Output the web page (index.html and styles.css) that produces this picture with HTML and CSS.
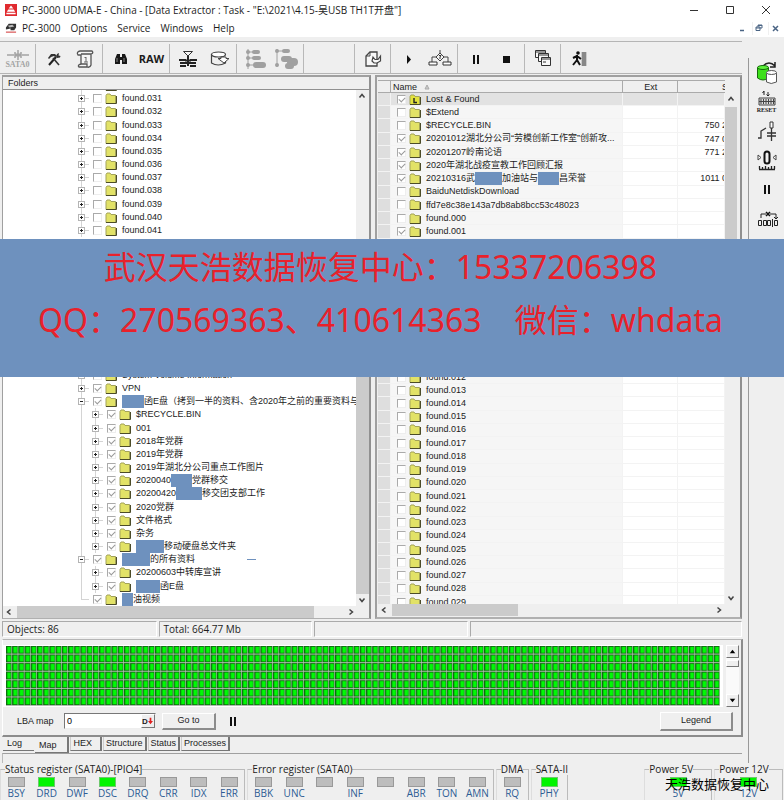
FILE: index.html
```html
<!DOCTYPE html>
<html lang="zh-CN">
<head>
<meta charset="utf-8">
<title>PC-3000 UDMA-E</title>
<link rel="stylesheet" href="styles.css">
</head>
<body>
<svg class="defs" aria-hidden="true">
  <symbol id="folder" viewBox="0 0 12 11">
    <path d="M1 10.500V2.500L2 1H5L6 2.500H10.500V10.500Z" fill="#e2e267" stroke="#a3a35a"/>
    <path d="M1 10.500H11.500V3" fill="none" stroke="#4c4c28"/>
  </symbol>
  <symbol id="folder-lost" viewBox="0 0 12 11">
    <path d="M1 10.500V2.500L2 1H5L6 2.500H10.500V10.500Z" fill="#e2e23c" stroke="#a3a35a"/>
    <path d="M1 10.500H11.500V3" fill="none" stroke="#4c4c28"/>
    <path d="M5 4V8.500H8" fill="none" stroke="#222" stroke-width="1.400"/>
  </symbol>
  <symbol id="up" viewBox="0 0 12 12"><path d="M3.500 7.500L6 4.500L8.500 7.500" fill="none" stroke="#444" stroke-width="1.500"/></symbol>
  <symbol id="down" viewBox="0 0 12 12"><path d="M3.500 4.500L6 7.500L8.500 4.500" fill="none" stroke="#444" stroke-width="1.500"/></symbol>
  <symbol id="left" viewBox="0 0 12 12"><path d="M7.500 3.500L4.500 6L7.500 8.500" fill="none" stroke="#444" stroke-width="1.500"/></symbol>
  <symbol id="right" viewBox="0 0 12 12"><path d="M4.500 3.500L7.500 6L4.500 8.500" fill="none" stroke="#444" stroke-width="1.500"/></symbol>
  <symbol id="pause" viewBox="0 0 24 24"><path d="M9 8H11V17H9ZM13 8H15V17H13Z" fill="#111"/></symbol>
</svg>

<header class="titlebar">
  <svg class="app-icon" viewBox="0 0 13 13"><rect width="13" height="13" fill="#e02a2f"/><path d="M6.500 1.500L9 5H4ZM3.500 6H9.500L11 8.500H2ZM1.500 9.500H11.500V11H1.500Z" fill="#fff"/></svg>
  <span class="title">PC-3000 UDMA-E - China - [Data Extractor : Task - "E:\2021\4.15-吴USB TH1T开盘"]</span>
  <button class="win" aria-label="Minimize"><svg viewBox="0 0 12 12"><path d="M2 6.500H10" stroke="#333"/></svg></button>
  <button class="win" aria-label="Maximize"><svg viewBox="0 0 12 12"><path d="M2.500 2.500H9.500V9.500H2.500Z" fill="none" stroke="#333"/></svg></button>
  <button class="win" aria-label="Close"><svg viewBox="0 0 12 12"><path d="M2 2L10 10M10 2L2 10" stroke="#333"/></svg></button>
</header>

<nav class="menubar">
  <svg class="app-icon" viewBox="0 0 13 13"><path d="M1 6L4 2H12V6L10 9H6V7L1 8Z" fill="#333"/><path d="M3 4L8 3L10 5L5 6Z" fill="#bbb"/><path d="M1 11H12" stroke="#dd6a6a" stroke-width="1.500"/></svg>
  <button>PC-3000</button><button>Options</button><button>Service</button><button>Windows</button><button>Help</button>
  <span class="mdi">
    <button aria-label="Minimize document"><svg viewBox="0 0 12 12"><path d="M3 8.500H7" stroke="#4a6484" stroke-width="1.500"/></svg></button>
    <button aria-label="Restore document"><svg viewBox="0 0 12 12"><path d="M5 5V3H9V6H7M3 5H7V8.500H3ZM3 6H7M5 3.500H9" fill="none" stroke="#4a6484"/></svg></button>
    <button aria-label="Close document"><svg viewBox="0 0 12 12"><path d="M4 4L9 9M9 4L4 9" stroke="#4a6484" stroke-width="1.500"/></svg></button>
  </span>
</nav>

<div class="workspace">
  <main class="main">
    <div class="toolbar">
      <div class="group"><button aria-label="SATA0" class="port"><svg viewBox="0 0 24 12"><path d="M1 6H8M16 6H23M9 3V9M15 3V9M12 1V11" stroke="#a4a4a4" stroke-width="1.500"/><path d="M9 6H15" stroke="#a4a4a4" stroke-width="3"/></svg><b>SATA0</b></button></div>
      <div class="group">
        <button aria-label="Tools"><svg viewBox="0 0 24 24"><path d="M7 18L14 10" stroke="#222" stroke-width="2"/><path d="M6 11L9 7L13 7L15 9L13 10L12 9L9 10L7 12Z" fill="#333"/><path d="M11 11L17 18" stroke="#333" stroke-width="1.600"/><path d="M14 10L15 7L17 6L16.500 8.500L18.500 9L18 10.500L15 11Z" fill="#333"/></svg></button>
        <button aria-label="Script"><svg viewBox="0 0 24 24"><path d="M7 4H19Q21 6 18 7V18Q17 21 14 20H6Q4 18 8 17V8H5Q3 5 7 4ZM8 7H18M8 17H14V20" fill="#f6f6f6" stroke="#555" stroke-width="1.300"/><path d="M13 10V15M11.500 10.500H13M11 15H15" fill="none" stroke="#666"/></svg></button>
      </div>
      <div class="group">
        <button aria-label="Find"><svg viewBox="0 0 24 24"><path d="M8 7H11V10H13V7H16L18 12V17H13V13H11V17H6V12Z" fill="#181818"/><path d="M8 11V15M15 11V15" stroke="#888"/></svg></button>
        <button><b class="raw">RAW</b></button>
      </div>
      <div class="group">
        <button aria-label="Sort"><svg viewBox="0 0 24 24"><path d="M7.500 4.500H16.500L12 9Z" fill="#f4f4f4" stroke="#333"/><path d="M12 9V19" stroke="#222" stroke-width="2"/><path d="M3 13H10M14 13H21M4 16H20M4 19H10M14 19H20M9 13.500H15" stroke="#222" stroke-width="2"/></svg></button>
        <button aria-label="Disk"><svg viewBox="0 0 24 24"><path d="M4.500 7V16Q11 20 18.500 16V13M4.500 7V9" fill="none" stroke="#444" stroke-width="1.200"/><ellipse cx="11.500" cy="7.500" rx="7" ry="2.500" fill="#fff" stroke="#444" stroke-width="1.200"/><path d="M11 11.500H14V10H19V11.500H22L17 16Z" fill="#fff" stroke="#444"/></svg></button>
      </div>
      <div class="group">
        <button aria-label="Map"><svg viewBox="0 0 24 24"><path d="M5 2V22M5 5H10M5 11H10M5 18H10" stroke="#a0a0a0"/><circle cx="5" cy="5" r="2" fill="#a0a0a0"/><circle cx="5" cy="11" r="2" fill="#a0a0a0"/><circle cx="5" cy="18" r="2" fill="#a0a0a0"/><rect x="9" y="3" width="8" height="4" rx="2" fill="#a0a0a0"/><rect x="9" y="9" width="9" height="4" rx="2" fill="#a0a0a0"/><rect x="10" y="15" width="13" height="6" rx="3" fill="#a0a0a0"/></svg></button>
        <button aria-label="Map selected"><svg viewBox="0 0 24 24"><path d="M3 2V20M3 4H14" stroke="#a0a0a0"/><circle cx="3" cy="4" r="2" fill="#a0a0a0"/><circle cx="3" cy="18" r="2" fill="#a0a0a0"/><rect x="8" y="2" width="8" height="4" rx="2" fill="#a0a0a0"/><rect x="7" y="9" width="11" height="6" rx="3" fill="#a0a0a0"/><rect x="13" y="11" width="11" height="8" rx="4" fill="#a0a0a0"/><rect x="11" y="16" width="9" height="6" rx="3" fill="#a0a0a0"/></svg></button>
      </div>
      <div class="group blank"></div>
      <div class="group"><button aria-label="Export"><svg viewBox="0 0 24 24"><path d="M9 5H16V19H5V9Z" fill="#f8f8f8" stroke="#444" stroke-width="1.300"/><path d="M9 5V9H5" fill="none" stroke="#444"/><path d="M12 10L14 12.500H17L19.500 9V14L16 16H13L11 14Z" fill="#f8f8f8" stroke="#444" stroke-width="1.200"/></svg></button></div>
      <div class="group">
        <button aria-label="Start"><svg viewBox="0 0 24 24"><path d="M10 8L14 12.500L10 17Z" fill="#111"/></svg></button>
        <button aria-label="Options"><svg viewBox="0 0 24 24"><path d="M12 6L16 10L12 14L8 10ZM12 3V6M8 10H4V15M16 10H20V15" fill="#f6f6f6" stroke="#444"/><path d="M1 15H9V18H1ZM15 15H23V18H15Z" fill="#fff" stroke="#333"/><path d="M11 8.500H13L12 10V12" fill="none" stroke="#333"/></svg></button>
      </div>
      <div class="group">
        <button aria-label="Pause"><svg viewBox="0 0 24 24"><use href="#pause"/></svg></button>
        <button aria-label="Stop"><svg viewBox="0 0 24 24"><path d="M8 9H15V16H8Z" fill="#111"/></svg></button>
      </div>
      <div class="group"><button aria-label="Windows"><svg viewBox="0 0 24 24"><g fill="#f8f8f8" stroke="#333"><path d="M4.500 3.500H14.500V10.500H4.500ZM4.500 5H14.500"/><path d="M7.500 6.500H17.500V14.500H7.500ZM7.500 8H17.500"/><path d="M10.500 10.500H19.500V18.500H10.500ZM10.500 12H19.500"/></g><path d="M12 15H15" stroke="#333"/></svg></button></div>
      <div class="group last"><button aria-label="Exit"><svg viewBox="0 0 24 24"><rect x="15" y="5" width="4" height="14" fill="#888"/><path d="M14.500 5V19M19.500 5V19" stroke="#ccc"/><circle cx="11" cy="6" r="1.800" fill="#111"/><path d="M10 8V13L13 18M10 13L6 18M10 9L6 11M10 9L14 12" fill="none" stroke="#111" stroke-width="2"/></svg></button></div>
    </div>

    <div class="panels">
      <section class="panel folders">
        <h2>Folders</h2>
        <div class="pane">
          <div class="tree-view"><ul class="tree" id="tree"></ul></div>
          <div class="vbar"><svg><use href="#up"/></svg><i class="thumb low"></i><svg><use href="#down"/></svg></div>
        </div>
        <div class="hbar"><svg><use href="#left"/></svg><i class="thumb wide"></i><i class="rest"></i><svg><use href="#right"/></svg><i class="corner"></i></div>
      </section>

      <section class="panel files">
        <table class="grid">
          <thead><tr><th></th><th class="name">Name <svg class="sort" viewBox="0 0 6 6"><path d="M3 1L5 5H1Z" fill="#ccc" stroke="#aaa"/></svg></th><th class="ext">Ext</th><th class="size"><span>S</span></th></tr></thead>
          <tbody id="rows"></tbody>
        </table>
        <div class="vbar"><svg><use href="#up"/></svg><i class="thumb high"></i><svg><use href="#down"/></svg></div>
        <div class="hbar"><svg><use href="#left"/></svg><i class="thumb narrow"></i><i class="rest"></i><svg><use href="#right"/></svg><i class="corner"></i></div>
      </section>
    </div>

    <div class="statusbar"><span>Objects: 86</span><span>Total: 664.77 Mb</span><span></span><span></span></div>

    <section class="map-panel">
      <div class="map-row">
        <div class="map-view">
          <svg class="map" viewBox="0 0 1150 70" preserveAspectRatio="none" role="img" aria-label="LBA map">
            <defs><pattern id="cell" width="10" height="10" patternUnits="userSpaceOnUse"><rect width="10" height="10" fill="#c4c4c4"/><rect width="9" height="9" fill="#0e6a0e"/><rect x="2" y="1" width="6" height="7" fill="#00fa05"/></pattern></defs>
            <rect width="1150" height="70" fill="url(#cell)"/>
          </svg>
        </div>
        <div class="classic-bar"><button aria-label="Scroll up"><svg viewBox="0 0 12 12"><path d="M6 4L9 8H3Z"/></svg></button><i></i><button aria-label="Scroll down"><svg viewBox="0 0 12 12"><path d="M6 8L9 4H3Z"/></svg></button></div>
      </div>
      <div class="controls">
        <label for="lba">LBA map</label>
        <span class="lba-box"><input id="lba" type="text" value="0"><button aria-label="Choose base"><b>D</b><svg viewBox="0 0 6 8"><path d="M2 0H4V4H6L3 8L0 4H2Z" fill="#e02020"/></svg></button></span>
        <button class="push">Go to</button>
        <button class="icon-only" aria-label="Pause map"><svg viewBox="0 0 24 24"><use href="#pause"/></svg></button>
        <button class="push legend">Legend</button>
      </div>
    </section>
    <div class="tabs"><button>Log</button><button class="active">Map</button><button>HEX</button><button>Structure</button><button>Status</button><button>Processes</button></div>
    <div class="tab-edge"></div>
  </main>

  <aside class="side">
    <button aria-label="Copy drive"><svg viewBox="0 0 24 24"><path d="M8 5Q14 -1 20 5M20 1V6H15" fill="none" stroke="#222" stroke-width="1.500"/><path d="M2.500 6.500V17Q8 21 13.500 17V6.500" fill="#3de01a" stroke="#176b0c"/><ellipse cx="8" cy="6.500" rx="5.500" ry="2" fill="#5cf03a" stroke="#176b0c"/><path d="M11.500 12V21Q16 24 21.500 21V12" fill="#fff" stroke="#555"/><ellipse cx="16.500" cy="11.500" rx="5" ry="2" fill="#fff" stroke="#555"/></svg></button>
    <button aria-label="Reset"><svg viewBox="0 0 24 16"><path d="M9 0V4M7.500 2L9 0M13 1V5L14.500 3.500M13 5L11.500 3.500" fill="none" stroke="#222"/><path d="M4 7H20V14H4Z" fill="#ddd" stroke="#444"/><path d="M6 8V13M8.500 8V13M11 8V13M13.500 8V13M16 8V13M18.500 8V13M4 10.500H20" stroke="#444"/></svg><b>RESET</b></button>
    <button aria-label="Power"><svg viewBox="0 0 24 24"><path d="M3 19H6V12L11 9M12 14H21M12 17H21M16.500 8V22" fill="none" stroke="#333" stroke-width="1.300"/><path d="M15 3H18V9H15Z" fill="#fff" stroke="#333"/></svg></button>
    <button aria-label="Recalibrate"><svg viewBox="0 0 24 24"><rect x="9.500" y="3.500" width="5" height="12" rx="2.500" fill="none" stroke="#111" stroke-width="2"/><path d="M3 7L6 9.500L3 12ZM21 7L18 9.500L21 12Z" fill="#fff" stroke="#444"/><path d="M4 21.500H20M4.500 18V21M7.500 19V21M10.500 18V21M13.500 19V21M16.500 18V21M19.500 18V21" stroke="#222" stroke-width="1.300"/></svg></button>
    <button aria-label="Pause"><svg viewBox="0 0 24 24"><use href="#pause"/></svg></button>
    <button aria-label="Sectors"><svg viewBox="0 0 24 24"><path d="M6 12V8H11M15 8H21V13M19 11L21 13L23 11" fill="none" stroke="#222"/><path d="M11 6L15 10M15 6L11 10" stroke="#111" stroke-width="1.500"/><path d="M3.500 14.500H6.500V19.500H3.500ZM8.500 14.500H11.500V19.500H8.500ZM12.500 14.500H15.500V19.500H12.500ZM19.500 14.500H22.500V19.500H19.500ZM17.500 13V21" fill="none" stroke="#222"/></svg></button>
  </aside>
</div>

<footer class="registers" id="registers">
  <p class="watermark">天浩数据恢复中心</p>
</footer>

<div class="banner"><p>武汉天浩数据恢复中心：15337206398</p><p>QQ：270569363、410614363&#160;&#160;&#160; 微信：whdata</p></div>
<script src="app.js"></script>
</body>
</html>
```
FILE: styles.css
```css
* { box-sizing: border-box; margin: 0; padding: 0; }
body {
  position: relative;
  display: flex;
  flex-direction: column;
  height: 100vh;
  overflow: hidden;
  background: #efefef;
  color: #1c1c1c;
  font: 9px/13px "Liberation Sans", "Noto Sans CJK SC", sans-serif;
}
button { border: 0; background: none; color: inherit; font: inherit; }
.defs { position: absolute; width: 0; height: 0; }

.titlebar, .menubar { display: flex; align-items: center; background: #fff; font: 10px/18px "Open Sans", "Noto Sans CJK SC", sans-serif; padding-left: 5px; flex: none; }
.titlebar { height: 19px; }
.menubar { height: 18px; gap: 10px; }
.app-icon { width: 12px; height: 12px; flex: none; }
.title { flex: 1; margin-left: 5px; white-space: nowrap; }
.win { width: 36px; height: 19px; display: grid; place-items: center; }
.win svg { width: 12px; height: 12px; }
.menubar .app-icon + button { margin-left: -5px; }
.mdi { margin-left: auto; display: flex; gap: 1px; background: #f0f0f0; }
.mdi button { width: 15px; height: 13px; background: #fff; }
.mdi svg { width: 12px; height: 12px; display: block; }

.workspace { display: flex; flex: 1; min-height: 0; }
.main { flex: 1; min-width: 0; display: flex; flex-direction: column; padding-left: 2px; padding-right: 6px; }

.toolbar { display: flex; flex: none; height: 37px; margin-top: 4px; margin-left: -2px; border-top: 1px solid #b5b5b5; padding: 2px 0 5px; margin-bottom: -3px; box-shadow: inset 0 -4px #efefef, inset 0 -5px #b5b5b5; }
.group { display: flex; align-items: center; padding: 0 2px; border-right: 1px solid #b8b8b8; }
.group.blank { width: 51px; }
.group.last { border: 0; }
.group button { width: 31px; height: 26px; display: flex; flex-direction: column; align-items: center; justify-content: center; }
.group svg { width: 24px; height: 24px; }
.group .port svg { height: 12px; }
.port b { color: #a4a4a4; font: bold 8px/8px "Liberation Serif", serif; }
.raw { font: bold 11px/14px "Open Sans", sans-serif; }

.panels { flex: 1; min-height: 0; display: grid; grid-template-columns: 369fr 367fr; gap: 4px; }
.panel { border: 2px solid #a0a0a0; border-right-color: #909090; border-bottom-color: #b0b0b0; min-width: 0; min-height: 0; }
.folders { display: flex; flex-direction: column; border-left-width: 1px; border-bottom-width: 1px; }
.folders h2 { font: inherit; height: 13px; padding-left: 5px; border-bottom: 1px solid #909090; flex: none; }
.pane { flex: 1; min-height: 0; display: flex; background: #fff; }
.tree-view { flex: 1; min-width: 0; overflow: hidden; display: flex; }
.tree { list-style: none; margin-top: -11px; padding-left: 75px; display: flex; flex-direction: column; flex: 1; min-width: 0; }
.tree li { flex: 1 1 0; min-height: 0; display: flex; align-items: center; white-space: nowrap; }
.guide { width: 14px; align-self: stretch; flex: none; background: linear-gradient(#d4d4d4, #d4d4d4) 3px 0 / 1px 100% no-repeat; }
.branch { width: 15px; align-self: stretch; flex: none; display: flex; align-items: center; background: linear-gradient(#d4d4d4, #d4d4d4) 3px 0 / 1px 100% no-repeat, linear-gradient(#d4d4d4, #d4d4d4) 3px 50% / 8px 1px no-repeat; }
.branch.end { background-size: 1px 50%, 8px 1px; }
.toggle { width: 7px; height: 7px; border: 1px solid #b4b4b4; background: linear-gradient(#222, #222) 1px 2px / 3px 1px no-repeat, linear-gradient(#222, #222) 2px 1px / 1px 3px no-repeat, #fff; }
.toggle.open { background: linear-gradient(#222, #222) 1px 2px / 3px 1px no-repeat, #fff; }

input[type="checkbox"] { appearance: none; width: 9px; height: 9px; flex: none; background: #fff; border: 1px solid #eee; border-top-color: #aaa; border-left-color: #aaa; }
input[type="checkbox"]:checked::before { content: ""; display: block; width: 5px; height: 3px; margin: 1px; border: solid #999; border-width: 0 0 1px 1px; transform: rotate(-45deg); }
.folder { width: 12px; height: 11px; margin: 0 5px 0 3px; flex: none; }
.label { display: flex; align-items: center; white-space: pre; }
.patch { background: #6e91be; height: 13px; flex: none; }
.mark { width: 9px; height: 1px; background: #6e91be; margin-left: 52px; }

.vbar { width: 12px; background: #efefef; display: flex; flex-direction: column; flex: none; }
.vbar svg, .hbar svg { width: 12px; height: 12px; flex: none; }
.hbar { height: 12px; background: #efefef; display: flex; }
.folders .vbar { width: 13px; }
.thumb { background: #cbcbcb; }
.thumb.low { flex: 1; margin-top: 200px; }
.thumb.high { height: 200px; margin-top: 2px; margin-bottom: auto; }
.thumb.wide { flex: 296; margin-left: 2px; }
.folders .rest { flex: 31; }
.thumb.narrow { flex: 126; margin-left: 2px; }
.files .rest { flex: 194; }
.corner { width: 12px; }

.files { display: grid; grid-template-columns: minmax(0, 1fr) 12px; grid-template-rows: minmax(0, 1fr) 12px; padding: 3px 3px 1px 1px; }
.files .vbar { margin-top: 13px; }
.files .hbar { grid-column: 1 / -1; }
.grid { display: flex; flex-direction: column; min-height: 0; overflow: hidden; }
.grid thead { display: block; height: 13px; flex: none; }
.grid tbody { flex: 1; min-height: 0; display: flex; flex-direction: column; margin-bottom: -5px; background: #fff; }
.grid tr { display: grid; grid-template-columns: 13px 231fr 55fr 47fr; }
.grid tbody tr { flex: 1 1 0; min-height: 0; }
.grid th { font-weight: normal; height: 13px; text-align: left; border: solid #aaa; border-width: 1px 1px 1px 0; padding-left: 2px; overflow: hidden; }
.grid th.ext { text-align: center; }
.grid th.size { text-align: right; border-right: 0; }
.size span { margin-right: -3px; }
.sort { width: 6px; height: 6px; margin: 0 0 2px 4px; vertical-align: middle; }
.grid td { min-width: 0; min-height: 0; border-bottom: 1px solid #f3f3f3; border-right: 1px solid #f3f3f3; overflow: hidden; white-space: nowrap; }
.grid td:first-child { background: #dedede; }
.grid td.name { display: flex; align-items: center; padding-left: 6px; background: #f6f6f6; overflow: visible; }
.grid td.size { text-align: right; }
.grid tr.selected td { background: #e2e2e2; }

.statusbar { display: grid; grid-template-columns: 155fr 154fr 154fr 273fr; gap: 2px; height: 16px; margin-top: 2px; flex: none; font: 10px/14px "Open Sans", sans-serif; }
.statusbar span { border: 1px solid #fff; border-top-color: #aaa; border-left-color: #aaa; padding-left: 4px; }

.map-panel { margin-top: 2px; height: 98px; flex: none; border: 2px solid #8c8c8c; border-top: 1px solid #b5b5b5; border-left: 1px solid #fff; padding-top: 5px; margin-right: -1px; }
.map-row { display: flex; justify-content: space-between; padding-right: 2px; height: 62px; }
.map-view { flex: 1; background: #fff; padding: 1px 3px; }
.map { display: block; width: 100%; height: 60px; }
.classic-bar { width: 13px; margin-left: 3px; background: #fafafa; display: flex; flex-direction: column; }
.classic-bar button, .classic-bar i { height: 13px; background: #efefef; border: 1px solid #fff; border-right-color: #777; border-bottom-color: #777; }
.classic-bar i { height: 7px; margin: 2px 0 auto; }
.classic-bar svg { display: block; width: 11px; height: 11px; }
.controls { display: flex; align-items: center; height: 28px; padding: 0 8px 0 14px; }
.controls label { width: 47px; }
.lba-box { display: flex; width: 92px; height: 16px; border: 1px solid #777; border-right-color: #eee; border-bottom-color: #eee; background: #fff; }
.lba-box input { flex: 1; min-width: 0; border: 0; outline: 0; background: none; font: inherit; padding-left: 2px; }
.lba-box button { display: flex; align-items: center; background: #efefef; width: 14px; border: 1px solid #fff; border-right-color: #777; border-bottom-color: #777; font-size: 8px; }
.lba-box svg { width: 5px; height: 8px; }
.push { width: 54px; height: 17px; margin-left: 6px; background: #efefef; border: 1px solid #fff; border-right: 2px solid #8c8c8c; border-bottom: 2px solid #8c8c8c; }
.push.legend { width: 73px; height: 19px; margin-left: auto; }
.icon-only { width: 24px; height: 24px; margin-left: 5px; }
.icon-only svg { width: 24px; height: 24px; display: block; }

.tabs { display: flex; flex: none; height: 16px; gap: 1px; padding-left: 1px; }
.tabs button { height: 14px; padding: 0 2px; border: solid #777; border-width: 0 2px 1px 1px; border-left-color: #ccc; }
.tabs button:first-child { padding: 0 12px 0 4px; border-width: 0 0 1px; }
.tabs .active { height: 16px; padding: 2px 10px 0 4px; border-left: 0; }
.tabs .active + button { padding: 0 8px 0 3px; }
.tab-edge { height: 10px; flex: none; border-top: 1px solid #a0a0a0; border-left: 1px solid #bbb; }

.side { width: 36px; margin-top: 21px; border-left: 1px solid #999; flex: none; }
.side button { width: 35px; height: 29px; display: flex; flex-direction: column; align-items: center; justify-content: center; }
.side svg { width: 24px; height: 24px; }
.side b { font: bold 6px/6px "Liberation Serif", serif; }
.side button:nth-child(2) svg { height: 16px; }

.registers { position: relative; display: grid; grid-template-columns: 246fr 247fr 33fr 37fr 73fr 68fr 69fr; height: 37px; flex: none; gap: 2px; padding-right: 1px; font: 10px/12px "Open Sans", sans-serif; overflow: hidden; }
.registers fieldset { border: 1px solid #bbb; border-bottom: 0; border-left-color: #ddd; min-width: 0; height: 50px; }
.registers legend { margin-left: 4px; white-space: nowrap; line-height: 12px; }
.leds { display: flex; justify-content: space-around; padding-top: 2px; }
.leds span { display: flex; flex-direction: column; align-items: center; width: 26px; color: #2d5c94; }
.leds i { width: 17px; height: 10px; background: #bdbdbd; border: 1px solid #999; }
.leds i.on { background: #00f500; border-color: #6cc86c; }
.watermark { position: absolute; right: 15px; bottom: 6px; color: #000; font: 13px/20px "Noto Sans CJK SC", sans-serif; }

.banner { position: absolute; left: 0; right: 0; top: 239px; height: 138px; padding: 1px 23px 0 0; background: #6e91be; color: #e8212b; font: 32px/53px "Noto Sans", "Noto Sans CJK SC", sans-serif; text-align: center; white-space: nowrap; }
```
FILE: app.js
```js
// A number inside a name stands for a covered stretch of that many pixels.
const found = (from, to, extra) =>
  Array.from({ length: to - from + 1 }, (_, i) => ({
    name: ['found.' + String(from + i).padStart(3, '0')], ...extra
  }));

// Rows that lie wholly under the banner stay empty.
const empty = count => Array.from({ length: count }, () => ({ empty: true }));

const child = (...name) => ({ name, level: 2, checked: true });

const tree = [
  { name: [''] },
  ...found(31, 41),
  ...empty(10),
  { name: ['System Volume Information'] },
  { name: ['VPN'], checked: true },
  { name: [22, '函E盘（拷到一半的资料、含2020年之前的重要资料与'], checked: true, open: true },
  child('$RECYCLE.BIN'),
  child('001'),
  child('2018年党群'),
  child('2019年党群'),
  child('2019年湖北分公司重点工作图片'),
  child('2020040', 21, '党群移交'),
  child('20200420', 26, '移交团支部工作'),
  child('2020党群'),
  child('文件格式'),
  child('杂务'),
  child(28, '移动硬盘总文件夹'),
  { name: [28, '的所有资料'], checked: true, open: true, mark: true },
  child('20200603中转库宣讲'),
  child(24, '函E盘'),
  { name: [11, '油视频'], checked: true, leaf: true }
];

const files = [
  { name: ['Lost & Found'], checked: true, selected: true, icon: 'folder-lost' },
  { name: ['$Extend'] },
  { name: ['$RECYCLE.BIN'], size: '750 2' },
  { name: ['20201012湖北分公司“劳模创新工作室”创新攻...'], checked: true, size: '747 0' },
  { name: ['20201207岭南论语'], checked: true, size: '771 2' },
  { name: ['2020年湖北战疫宣教工作回顾汇报'], checked: true },
  { name: ['20210316武', 27, '加油站与', 21, '昌荣誉'], checked: true, size: '1011 0' },
  { name: ['BaiduNetdiskDownload'] },
  { name: ['ffd7e8c38e143a7db8ab8bcc53c48023'] },
  ...found(0, 0),
  ...found(1, 1, { checked: true }),
  ...empty(10),
  ...found(12, 29)
];

const esc = s => s.replace(/&/g, '&amp;');
const label = parts => parts.map(p =>
  typeof p === 'number' ? `<i class="patch" style="width:${p}px"></i>` : `<span>${esc(p)}</span>`).join('');

const entry = (item, id) => item.empty ? '' :
  `<input type="checkbox" id="${id}"${item.checked ? ' checked' : ''}>` +
  `<svg class="folder"><use href="#${item.icon || 'folder'}"/></svg>` +
  `<label class="label" for="${id}">${label(item.name)}</label>`;

document.getElementById('tree').innerHTML = tree.map((item, i) =>
  item.empty ? '<li></li>' :
  '<li>' + (item.level === 2 ? '<i class="guide"></i>' : '') +
  `<span class="branch${item.leaf ? ' end' : ''}">` +
  (item.leaf ? '' : `<button class="toggle${item.open ? ' open' : ''}" aria-label="Toggle"></button>`) +
  '</span>' + entry(item, 't' + i) + (item.mark ? '<i class="mark"></i>' : '') + '</li>').join('');

document.getElementById('rows').innerHTML = files.map((item, i) =>
  `<tr${item.selected ? ' class="selected"' : ''}><td></td><td class="name">${entry(item, 'f' + i)}</td>` +
  `<td></td><td class="size"><span>${item.size || ''}</span></td></tr>`).join('');

// An asterisk marks a lit lamp.
const registers = [
  ['Status register (SATA0)-[PIO4]', 'BSY *DRD DWF *DSC DRQ CRR IDX ERR'],
  ['Error register (SATA0)', 'BBK UNC - INF - ABR TON AMN'],
  ['DMA', 'RQ'],
  ['SATA-II', '*PHY'],
  null,
  ['Power 5V', '*5V'],
  ['Power 12V', '*12V']
];

document.getElementById('registers').insertAdjacentHTML('afterbegin', registers.map(r => r
  ? `<fieldset><legend>${r[0]}</legend><div class="leds">` + r[1].split(' ').map(n =>
      `<span><i${n[0] === '*' ? ' class="on"' : ''}></i>${n.replace(/[*-]/, '')}</span>`).join('') + '</div></fieldset>'
  : '<div></div>').join(''));
```
